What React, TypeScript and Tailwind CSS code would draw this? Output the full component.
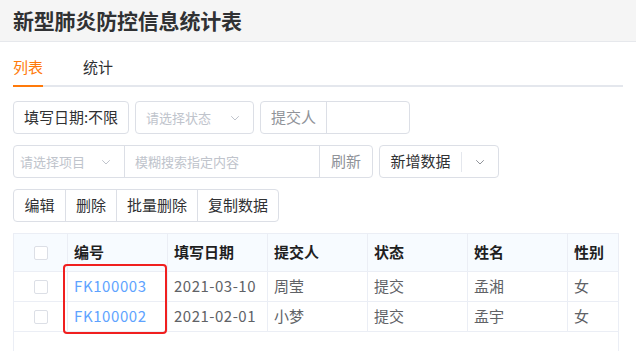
import React from 'react';

const Chevron = ({ className = '' }: { className?: string }) => (
  <svg width="12" height="12" viewBox="0 0 12 12" fill="none" className={className}>
    <path d="M2.5 4.5L6 8l3.5-3.5" stroke="currentColor" strokeWidth="1" strokeLinecap="round" strokeLinejoin="round" />
  </svg>
);

const CheckBox = () => (
  <span className="block w-[14px] h-[14px] rounded-[2px] border border-[#dcdfe6] bg-white" />
);

const App = () => {
  // 表格数据
  const rows = [
    { code: 'FK100003', date: '2021-03-10', user: '周莹', status: '提交', name: '孟湘', sex: '女' },
    { code: 'FK100002', date: '2021-02-01', user: '小梦', status: '提交', name: '孟宇', sex: '女' },
  ];

  const cols = ['编号', '填写日期', '提交人', '状态', '姓名', '性别'];

  return (
    <div
      className="w-[636px] h-[351px] overflow-hidden bg-white text-[#606266]"
      style={{ fontFamily: '"Noto Sans CJK SC", "Noto Sans", sans-serif' }}
    >
      <div className="h-[42px] bg-[#f5f5f5] border-b border-[#e6e8ec] flex items-center px-[13px]">
        <h1 className="text-[21px] font-bold text-[#303133] leading-none tracking-[-0.2px]">新型肺炎防控信息统计表</h1>
      </div>

      {/* tabs */}
      <div className="mx-[13px] h-[45px] flex items-end border-b-2 border-[#e4e7ed]">
        <div className="relative w-[30px] mr-[40px] pb-[11px] text-[15px] text-[#ff7a0a] leading-none">
          列表
          <span className="absolute left-0 right-0 -bottom-[2px] h-[2px] bg-[#ff7a0a]" />
        </div>
        <div className="pb-[11px] text-[15px] text-[#303133] leading-none">统计</div>
      </div>

      <div className="px-[13px] pt-[14px] flex flex-col gap-[11px]">
        {/* row 1 */}
        <div className="flex gap-[6px] h-[33px]">
          <button className="w-[116px] border border-[#dcdfe6] rounded-[4px] text-[15px] text-[#303133] flex items-center justify-center">
            填写日期:不限
          </button>
          <div className="w-[119px] border border-[#dcdfe6] rounded-[4px] flex items-center justify-between pl-[10px] pr-[12px] text-[13px] text-[#c0c4cc]">
            <span>请选择状态</span>
            <Chevron className="text-[#c0c4cc]" />
          </div>
          <div className="w-[150px] border border-[#dcdfe6] rounded-[4px] flex">
            <div className="w-[66px] border-r border-[#dcdfe6] flex items-center justify-center text-[15px] text-[#909399]">提交人</div>
            <div className="flex-1" />
          </div>
        </div>

        {/* row 2 */}
        <div className="flex gap-[6px] h-[33px]">
          <div className="w-[360px] border border-[#dcdfe6] rounded-[4px] flex">
            <div className="w-[111px] border-r border-[#dcdfe6] flex items-center justify-between pl-[6px] pr-[12px] text-[13px] text-[#c0c4cc]">
              <span>请选择项目</span>
              <Chevron className="text-[#c0c4cc]" />
            </div>
            <div className="w-[195px] border-r border-[#dcdfe6] flex items-center pl-[10px] text-[13px] text-[#c0c4cc]">模糊搜索指定内容</div>
            <div className="flex-1 flex items-center justify-center text-[15px] text-[#909399]">刷新</div>
          </div>
          <div className="w-[120px] border border-[#dcdfe6] rounded-[4px] flex items-center">
            <div className="w-[81px] text-center text-[15px] text-[#303133]">新增数据</div>
            <div className="w-px h-[20px] bg-[#e4e7ed]" />
            <div className="flex-1 flex justify-center">
              <Chevron className="text-[#909399]" />
            </div>
          </div>
        </div>

        {/* row 3 */}
        <div className="flex h-[33px]">
          <div className="flex border border-[#dcdfe6] rounded-[4px] text-[15px] text-[#303133]">
            <div className="w-[51px] flex items-center justify-center">编辑</div>
            <div className="w-[51px] flex items-center justify-center border-l border-[#dcdfe6]">删除</div>
            <div className="w-[81px] flex items-center justify-center border-l border-[#dcdfe6]">批量删除</div>
            <div className="w-[81px] flex items-center justify-center border-l border-[#dcdfe6]">复制数据</div>
          </div>
        </div>

        {/* table */}
        <div className="relative w-[606px] border-x border-t border-[#ebeef5] h-[200px]">
          <div className="flex h-[38px] bg-[#f7fbff] border-b border-[#ebeef5] text-[15px] font-bold text-[#1f1f1f]">
            <div className="w-[54px] border-r border-[#ebeef5] flex items-center justify-center">
              <CheckBox />
            </div>
            {cols.map((c, i) => (
              <div
                key={c}
                className={`${i === cols.length - 1 ? 'w-[50px]' : 'w-[100px] border-r border-[#ebeef5]'} flex items-center pl-[6px]`}
              >
                {c}
              </div>
            ))}
          </div>
          {rows.map((r) => (
            <div key={r.code} className="flex h-[30px] border-b border-[#ebeef5] text-[15px]">
              <div className="w-[54px] border-r border-[#ebeef5] flex items-center justify-center">
                <CheckBox />
              </div>
              <div className="w-[100px] border-r border-[#ebeef5] flex items-center pl-[6px] text-[#5ea3ff] tracking-[0.6px]">{r.code}</div>
              <div className="w-[100px] border-r border-[#ebeef5] flex items-center pl-[6px] tracking-[0.5px]">{r.date}</div>
              <div className="w-[100px] border-r border-[#ebeef5] flex items-center pl-[6px]">{r.user}</div>
              <div className="w-[100px] border-r border-[#ebeef5] flex items-center pl-[6px]">{r.status}</div>
              <div className="w-[100px] border-r border-[#ebeef5] flex items-center pl-[6px]">{r.name}</div>
              <div className="w-[50px] flex items-center pl-[6px]">{r.sex}</div>
            </div>
          ))}

          {/* highlight */}
          <div className="absolute left-[49px] top-[30px] w-[104px] h-[70px] border-2 border-[#f01f1f] rounded-[4px]" />
        </div>
      </div>
    </div>
  );
};

export default App;
